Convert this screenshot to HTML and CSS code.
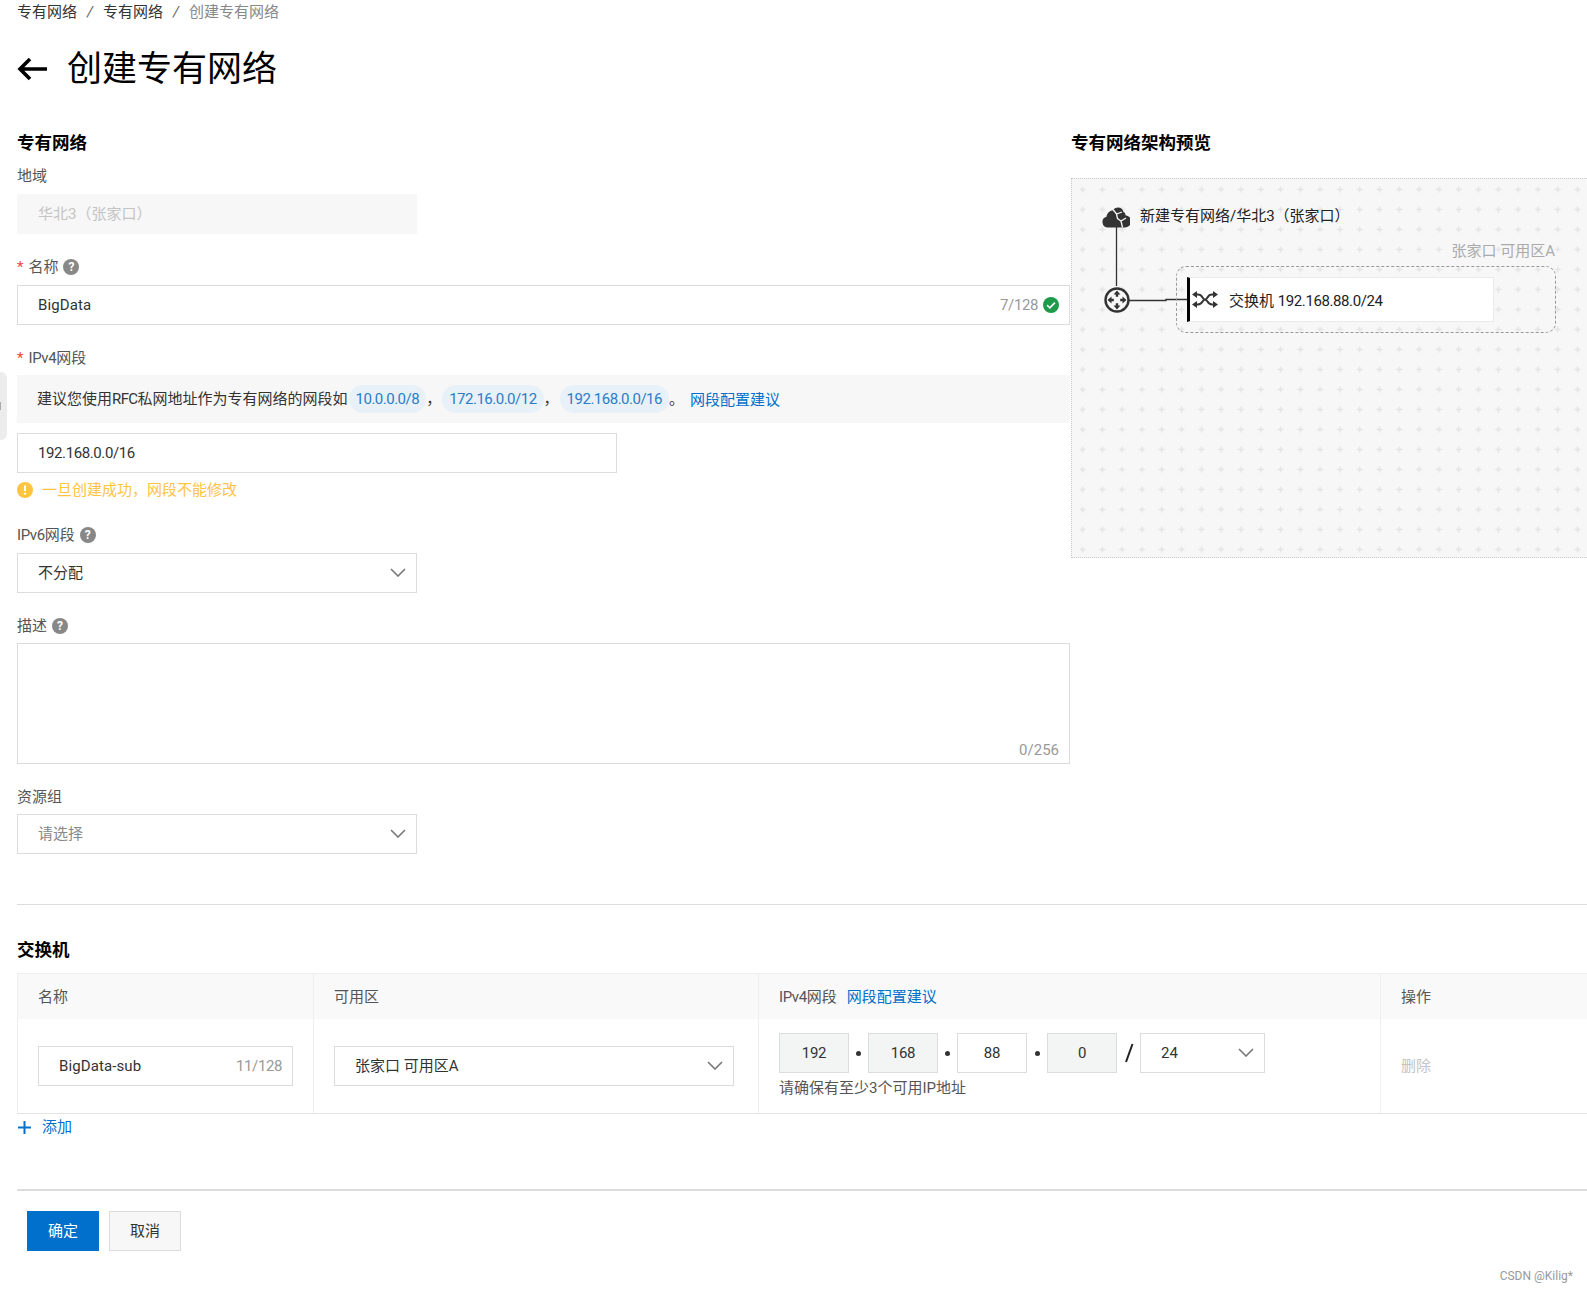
FILE: index.html
```html
<!DOCTYPE html>
<html lang="zh-CN">
<head>
  <meta charset="UTF-8" />
  <title>创建专有网络</title>
  <link rel="stylesheet" href="styles.css">
</head>
<body>
  <div class="side-tab"><span class="side-arrow"></span></div>

  <div class="breadcrumb">
    <span>专有网络</span><i>/</i><span>专有网络</span><i>/</i><span class="current">创建专有网络</span>
  </div>

  <div class="page-title">
    <svg class="back" width="32" height="24" viewBox="0 0 32 24"><path d="M30 12H3M13 2L3 12l10 10" fill="none" stroke="#000" stroke-width="3.6"/></svg>
    <h1>创建专有网络</h1>
  </div>

  <div class="top">
    <div class="form">
      <h3>专有网络</h3>
      <div class="field">
        <div class="label">地域</div>
        <div class="input disabled w400">华北3（张家口）</div>
      </div>
      <div class="field">
        <div class="label"><b>*</b>名称<span class="help">?</span></div>
        <div class="input">
          <span class="word">BigData</span>
          <span class="count num">7/128</span>
          <svg class="ok" width="16" height="16" viewBox="0 0 16 16"><circle cx="8" cy="8" r="8" fill="#1e9a4b"/><path d="M4 8.2l2.8 2.6L12 5.6" fill="none" stroke="#fff" stroke-width="1.6"/></svg>
        </div>
      </div>
      <div class="field tight">
        <div class="label short"><b>*</b><span class="num">IPv4</span>网段</div>
        <div class="notice">
          建议您使用<span class="rfc">RFC</span>私网地址作为专有网络的网段如
          <span class="chip">10.0.0.0/8</span><span class="comma">，</span>
          <span class="chip">172.16.0.0/12</span><span class="comma">，</span>
          <span class="chip">192.168.0.0/16</span><span class="period">。</span>
          <a class="link lower">网段配置建议</a>
        </div>
        <div class="input w600"><span class="num">192.168.0.0/16</span></div>
        <div class="warn">
          <svg width="16" height="16" viewBox="0 0 16 16"><circle cx="8" cy="8" r="8" fill="#ffc440"/><path d="M8 3.5v5.6" stroke="#fff" stroke-width="2"/><circle cx="8" cy="11.6" r="1.2" fill="#fff"/></svg>
          一旦创建成功，网段不能修改
        </div>
      </div>
      <div class="field">
        <div class="label"><span class="num">IPv6</span>网段<span class="help">?</span></div>
        <div class="input select w400">不分配<svg class="chevron" width="16" height="9" viewBox="0 0 16 9"><path d="M1 1l7 7 7-7" fill="none" stroke="#777" stroke-width="1.6"/></svg></div>
      </div>
      <div class="field">
        <div class="label short">描述<span class="help">?</span></div>
        <div class="textarea"><span class="count">0/256</span></div>
      </div>
      <div class="field last">
        <div class="label short">资源组</div>
        <div class="input select w400 placeholder">请选择<svg class="chevron" width="16" height="9" viewBox="0 0 16 9"><path d="M1 1l7 7 7-7" fill="none" stroke="#777" stroke-width="1.6"/></svg></div>
      </div>
    </div>

    <div class="preview">
      <h3>专有网络架构预览</h3>
      <div class="canvas">
        <svg class="canvas-bg" width="100%" height="100%">
          <defs>
            <pattern id="plus" x="0" y="0" width="19.8" height="20" patternUnits="userSpaceOnUse">
              <path d="M7.500 10.500h6M10.500 7.500v6" stroke="#e4e4e4" stroke-width="1.400"/>
            </pattern>
          </defs>
          <rect width="100%" height="100%" fill="url(#plus)"/>
        </svg>

        <svg class="wires" width="130" height="160" viewBox="0 0 130 160">
          <path d="M44.500 45v62M56 121.500h38v-1h22" fill="none" stroke="#333" stroke-width="1.300"/>
        </svg>

        <svg class="node-cloud" width="28" height="21" viewBox="0 0 28 21">
          <path d="M6 20.500a5.500 5.500 0 0 1-1.500-10.800C5 6 8 3.500 10.500 3.500 12 1.500 14 .5 16 .5c3 0 5 2 5.500 4.500 1.500.5 2 1.800 2 3.200A5.800 5.800 0 0 1 22.500 20.500z" fill="#333"/>
          <path d="M11 2.500l3.500 4.500 5.500-2M14.500 7l1 4.500 3.500 2.500 5-3M19 14l1.500 6.500" fill="none" stroke="#f7f7f7" stroke-width="1.300"/>
        </svg>
        <div class="node-text cloud-text">新建专有网络/华北3（张家口）</div>

        <svg class="node-router" width="26" height="26" viewBox="0 0 26 26">
          <circle cx="13" cy="13" r="11.500" fill="#f7f7f7" stroke="#333" stroke-width="2.400"/>
          <path d="M13 3.500l3.400 4h-2.200v2.300h-2.400V7.500H9.600zM13 22.500l3.400-4h-2.200v-2.300h-2.400v2.300H9.600zM3.500 13l4-3.400v2.200h2.300v2.400H7.500v2.200zM22.500 13l-4-3.400v2.200h-2.300v2.400h2.300v2.200z" fill="#333"/>
        </svg>

        <div class="zone-label">张家口 可用区A</div>
        <div class="zone">
          <div class="switch">
            <svg width="26" height="19" viewBox="0 0 26 19">
              <path d="M3 4.500h3c5 0 4 5 7 5s2-5 7-5h3M3 14.500h3c5 0 4-5 7-5s2 5 7 5h3" fill="none" stroke="#333" stroke-width="2"/>
              <path d="M21 1l5 3.500L21 8zM21 11l5 3.500-5 3.500zM5 1L0 4.500 5 8zM5 11L0 14.500 5 18z" fill="#333"/>
            </svg>
            <span class="switch-text">交换机 <span class="num">192.168.88.0/24</span></span>
          </div>
        </div>
      </div>
    </div>
  </div>

  <div class="divider"></div>

  <h3 class="sw-title">交换机</h3>
  <div class="sw-table">
    <div class="th">名称</div>
    <div class="th">可用区</div>
    <div class="th"><span class="num">IPv4</span>网段<a class="link th-link">网段配置建议</a></div>
    <div class="th">操作</div>

    <div class="td mid">
      <div class="input"><span class="word">BigData-sub</span><span class="count end num">11/128</span></div>
    </div>
    <div class="td mid sel">
      <div class="input select">张家口 可用区A<svg class="chevron" width="16" height="9" viewBox="0 0 16 9"><path d="M1 1l7 7 7-7" fill="none" stroke="#777" stroke-width="1.6"/></svg></div>
    </div>
    <div class="td ip">
      <div class="ip-row">
        <div class="octet gray">192</div><span class="dot"></span>
        <div class="octet gray">168</div><span class="dot"></span>
        <div class="octet">88</div><span class="dot wide"></span>
        <div class="octet gray">0</div>
        <svg class="slash" width="12" height="24" viewBox="0 0 12 24"><path d="M9.500 3L3 21" stroke="#222" stroke-width="2"/></svg>
        <div class="input select mask">24<svg class="chevron" width="16" height="9" viewBox="0 0 16 9"><path d="M1 1l7 7 7-7" fill="none" stroke="#777" stroke-width="1.6"/></svg></div>
      </div>
      <div class="ip-hint">请确保有至少3个可用IP地址</div>
    </div>
    <div class="td mid"><span class="muted">删除</span></div>
  </div>

  <div class="add">
    <svg width="13" height="13" viewBox="0 0 13 13"><path d="M6.500 0v13M0 6.500h13" stroke="#0070cc" stroke-width="2"/></svg>
    <a class="link">添加</a>
  </div>

  <div class="footer">
    <button class="btn primary">确定</button>
    <button class="btn">取消</button>
  </div>

  <div class="watermark">CSDN @Kilig*</div>
</body>
</html>
```
FILE: styles.css
```css
* {
  box-sizing: border-box;
}

html, body {
  height: 100%;
}

body {
  margin: 0;
  padding-left: 17px;
  background: #fff;
  color: #333;
  font-family: Roboto, "Noto Sans CJK SC", sans-serif;
  font-size: 15px;
  line-height: 20px;
  overflow: hidden;
  position: relative;
}

.num {
  letter-spacing: -0.4px;
}

.word {
  letter-spacing: 0.1px;
}

.side-tab {
  position: absolute;
  left: 0;
  top: 372px;
  width: 7px;
  height: 68px;
  background: #ececec;
  border-radius: 0 6px 6px 0;
}

.side-arrow {
  position: absolute;
  left: 0;
  top: 30px;
  width: 4px;
  height: 8px;
  border-left: 1px solid #aaa;
}

.breadcrumb {
  height: 22px;
  line-height: 24px;
  display: flex;
  color: #333;
}

.breadcrumb i {
  width: 26px;
  text-align: center;
  color: #666;
}

.breadcrumb .current {
  color: #888;
}

.page-title {
  height: 50px;
  margin-top: 20px;
  display: flex;
  align-items: center;
}

.back {
  margin-right: 18px;
  margin-top: 4px;
}

h1 {
  margin: 0;
  font-size: 35px;
  font-weight: 400;
  color: #000;
  line-height: 50px;
  padding-top: 6px;
}

h3 {
  margin: 0;
  height: 24px;
  line-height: 24px;
  font-size: 17.5px;
  font-weight: 700;
  color: #000;
}

.top {
  display: flex;
  margin-top: 39px;
}

.form {
  width: 1053px;
  flex: none;
}

.form h3 {
  margin-bottom: 11px;
}

.field {
  margin-bottom: 23px;
}

.field.tight {
  margin-bottom: 25px;
}

.field.last {
  margin-bottom: 50px;
}

.label {
  height: 20px;
  margin-bottom: 8px;
  color: #555;
  display: flex;
  align-items: center;
}

.label.short {
  margin-bottom: 7px;
}

.label b {
  color: #f04631;
  font-weight: 400;
  margin-right: 5px;
}

.help {
  width: 16px;
  height: 16px;
  margin-left: 5px;
  border-radius: 50%;
  background: #888;
  color: #fff;
  font-size: 12px;
  font-weight: 700;
  line-height: 16px;
  text-align: center;
}

.input {
  height: 40px;
  border: 1px solid #dcdcdc;
  padding: 0 20px;
  display: flex;
  align-items: center;
  color: #333;
  background: #fff;
  position: relative;
}

.w400 {
  width: 400px;
}

.w600 {
  width: 600px;
}

.input.disabled {
  background: #f7f7f7;
  border-color: #f7f7f7;
  color: #c4c4c4;
}

.input.placeholder {
  color: #888;
}

.count {
  margin-left: auto;
  color: #999;
}

.input .count.end {
  margin-right: -10px;
}

.ok {
  margin-left: 5px;
  margin-right: -10px;
}

.chevron {
  position: absolute;
  right: 10px;
  top: 14px;
}

.notice {
  height: 48px;
  margin-bottom: 10px;
  padding-left: 20px;
  background: #f7f7f7;
  display: flex;
  align-items: center;
  white-space: nowrap;
  color: #333;
}

.rfc {
  letter-spacing: -0.6px;
}

.chip {
  height: 28px;
  line-height: 28px;
  padding: 0 7px;
  margin-left: 1px;
  border-radius: 14px;
  background: #e8f0f8;
  color: #2a7dc6;
  letter-spacing: -0.5px;
}

.comma {
  width: 15px;
  color: #333;
}

.period {
  width: 21px;
}

.link {
  color: #0070cc;
}

.link.lower {
  padding-top: 2px;
}

.warn {
  height: 20px;
  margin-top: 7px;
  display: flex;
  align-items: center;
  gap: 9px;
  color: #ffc440;
}

.textarea {
  height: 121px;
  border: 1px solid #dcdcdc;
  display: flex;
  align-items: flex-end;
  padding: 0 10px 3px;
}

.preview {
  flex: none;
  width: 520px;
  margin-left: 1px;
}

.canvas {
  width: 520px;
  height: 380px;
  margin-top: 23px;
  background: #f7f7f7;
  border: 1px dotted #c8c8c8;
  position: relative;
}

.canvas-bg {
  position: absolute;
  left: 0;
  top: 0;
}

.wires {
  position: absolute;
  left: 0;
  top: 0;
}

.node-cloud {
  position: absolute;
  left: 30px;
  top: 28px;
}

.node-text {
  position: absolute;
  color: #222;
  white-space: nowrap;
}

.cloud-text {
  left: 68px;
  top: 27px;
}

.node-router {
  position: absolute;
  left: 32px;
  top: 108px;
}

.zone-label {
  position: absolute;
  right: 35px;
  top: 62px;
  color: #aaa;
}

.zone {
  position: absolute;
  left: 104px;
  top: 87px;
  width: 380px;
  height: 67px;
  border: 1px dashed #999;
  border-radius: 10px;
  padding: 10px 0 0 10px;
}

.switch {
  width: 307px;
  height: 45px;
  background: #fff;
  border: 1px solid #eaeaea;
  border-left: 3px solid #000;
  display: flex;
  align-items: center;
  padding-left: 2px;
  gap: 11px;
  color: #222;
}

.switch-text {
  padding-top: 2px;
}

.divider {
  height: 1px;
  background: #dcdcdc;
  margin-right: -20px;
}

.sw-title {
  margin-top: 33px;
  margin-bottom: 11px;
}

.sw-table {
  display: grid;
  grid-template-columns: 296px 445px 622px 240px;
  grid-template-rows: 45px 94px;
  border-top: 1px solid #efefef;
  border-bottom: 1px solid #e4e4e4;
}

.th {
  background: #f9f9f9;
  border-left: 1px solid #efefef;
  padding-left: 20px;
  display: flex;
  align-items: center;
  color: #555;
}

.th-link {
  margin-left: 10px;
}

.td {
  border-left: 1px solid #efefef;
  padding-left: 20px;
}

.td.mid {
  display: flex;
  align-items: center;
  padding-right: 20px;
}

.td.mid .input {
  width: 100%;
}

.td.sel {
  padding-right: 24px;
}

.td.ip {
  padding-top: 14px;
}

.ip-row {
  display: flex;
  align-items: center;
}

.octet {
  width: 70px;
  height: 40px;
  line-height: 38px;
  border: 1px solid #dcdcdc;
  text-align: center;
  letter-spacing: -0.25px;
}

.octet.gray {
  background: #f3f5f5;
}

.dot {
  width: 19px;
  display: flex;
  justify-content: center;
}

.dot.wide {
  width: 20px;
}

.dot::before {
  content: "";
  width: 5px;
  height: 5px;
  border-radius: 50%;
  background: #333;
}

.slash {
  margin: 0 5px 0 6px;
}

.mask {
  width: 125px;
  padding-left: 20px;
}

.ip-hint {
  margin-top: 5px;
  color: #555;
}

.muted {
  color: #c4c4c4;
}

.add {
  height: 20px;
  margin-top: 3px;
  display: flex;
  align-items: center;
  gap: 11px;
  padding-left: 1px;
}

.footer {
  margin-top: 52px;
  margin-right: -20px;
  border-top: 2px solid #dcdcdc;
  padding: 20px 0 0 10px;
  display: flex;
  gap: 10px;
}

.btn {
  width: 72px;
  height: 40px;
  border: 1px solid #dcdcdc;
  background: #f7f7f7;
  color: #333;
  font: inherit;
  padding: 0;
}

.btn.primary {
  background: #0070cc;
  border-color: #0070cc;
  color: #fff;
}

.watermark {
  position: absolute;
  right: 14px;
  top: 1268px;
  line-height: 16px;
  font-size: 12px;
  color: #999;
}
```
